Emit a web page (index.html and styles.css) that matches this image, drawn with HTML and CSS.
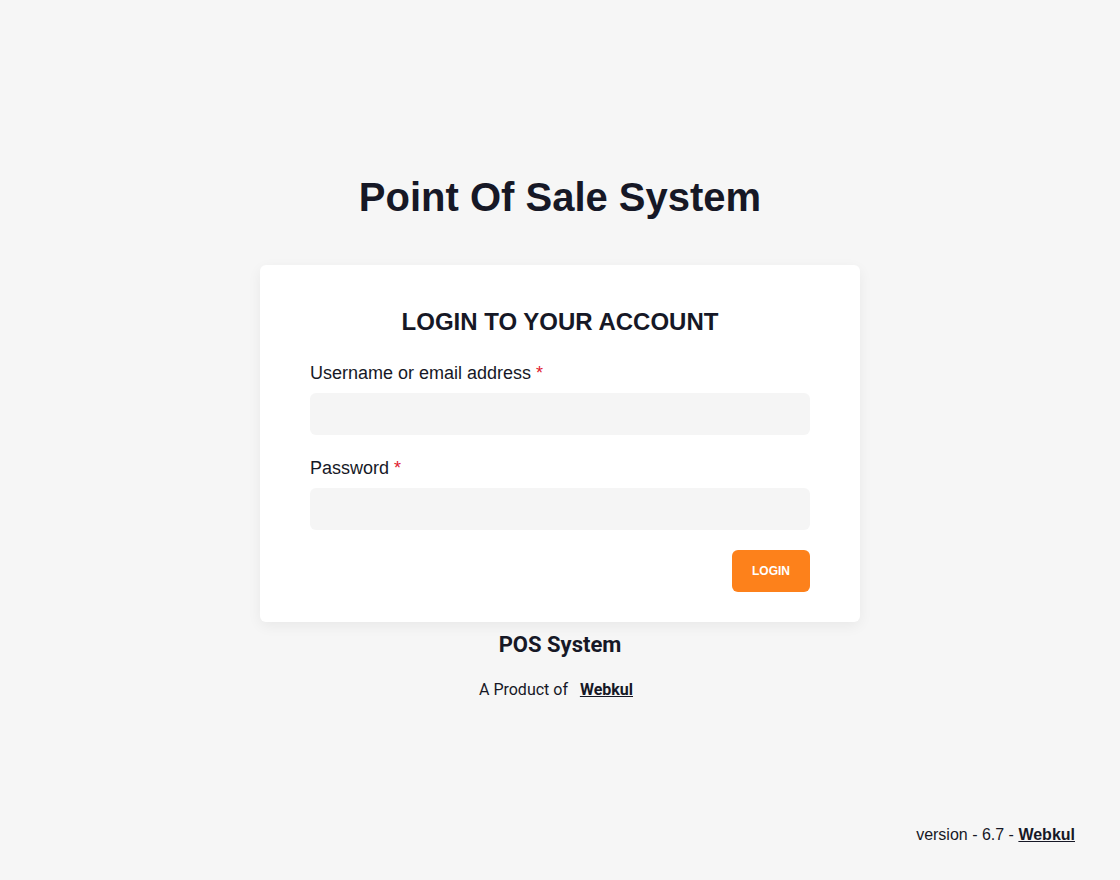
FILE: index.html
```html
<!DOCTYPE html>
<html>

<head>
    <meta name="viewport" content="width=device-width, initial-scale=1">
    <title>Point Of Sale System</title>
    <link rel="stylesheet" href="styles.css">
</head>

<body>
    <div class="page">
        <div class="main">
            <h1 class="title">Point Of Sale System</h1>

            <form class="login-card" action="">
                <h2 class="login-heading">LOGIN TO YOUR ACCOUNT</h2>

                <label class="field-label" for="username">Username or email address <span class="req">*</span></label>
                <input class="field-input" type="text" id="username">

                <label class="field-label" for="password">Password <span class="req">*</span></label>
                <input class="field-input" type="password" id="password">

                <div class="actions">
                    <button type="button" class="login-btn">LOGIN</button>
                </div>
            </form>

            <div class="product-name">POS System</div>
            <div class="product-of">A Product of &nbsp; <a href="#">Webkul</a></div>
        </div>

        <div class="footer">version - 6.7 - <a href="#">Webkul</a></div>
    </div>
</body>

</html>
```

FILE: styles.css
```css
body {
    margin: 0;
    background-color: #f6f6f6;
    color: #161826;
    font-family: "Liberation Sans", Arial, Helvetica, sans-serif;
}

.page {
    min-height: 100vh;
    display: flex;
    flex-direction: column;
}

.main {
    display: flex;
    flex-direction: column;
    align-items: center;
    padding-top: 173px;
}

.title {
    margin: 0;
    font-size: 40px;
    line-height: 48px;
    font-weight: bold;
}

.login-card {
    width: 600px;
    box-sizing: border-box;
    margin-top: 44px;
    padding: 43px 50px 30px 50px;
    background-color: #fff;
    border-radius: 6px;
    box-shadow: 0 4px 14px rgba(0, 0, 0, 0.06);
    display: flex;
    flex-direction: column;
}

.login-heading {
    margin: 0 0 26px 0;
    text-align: center;
    font-size: 24px;
    line-height: 28px;
    font-weight: bold;
}

.field-label {
    font-size: 18px;
    line-height: 22px;
    margin-bottom: 9px;
}

.req {
    color: #e0202e;
}

.field-input {
    height: 42px;
    border: none;
    border-radius: 6px;
    background-color: #f5f5f5;
    padding: 0 14px;
    font-size: 16px;
    margin-bottom: 22px;
    outline: none;
}

#password {
    margin-bottom: 20px;
}

.actions {
    display: flex;
    justify-content: flex-end;
}

.login-btn {
    width: 78px;
    height: 42px;
    border: none;
    border-radius: 6px;
    background-color: #fd811b;
    color: #fff;
    font-family: "Liberation Sans", Arial, sans-serif;
    font-size: 12px;
    font-weight: bold;
    cursor: pointer;
}

.login-btn:hover {
    opacity: 0.8;
}

.product-name {
    margin-top: 10px;
    font-family: Roboto, "Liberation Sans", sans-serif;
    font-size: 22px;
    line-height: 26px;
    font-weight: bold;
}

.product-of {
    margin-top: 22px;
    margin-right: 8px;
    font-family: Roboto, "Liberation Sans", sans-serif;
    font-size: 16px;
    line-height: 20px;
}

.product-of a,
.footer a {
    color: #161826;
    font-weight: bold;
}

.footer {
    margin-top: auto;
    padding: 0 45px 35px 0;
    text-align: right;
    font-size: 16px;
    line-height: 20px;
}
```
